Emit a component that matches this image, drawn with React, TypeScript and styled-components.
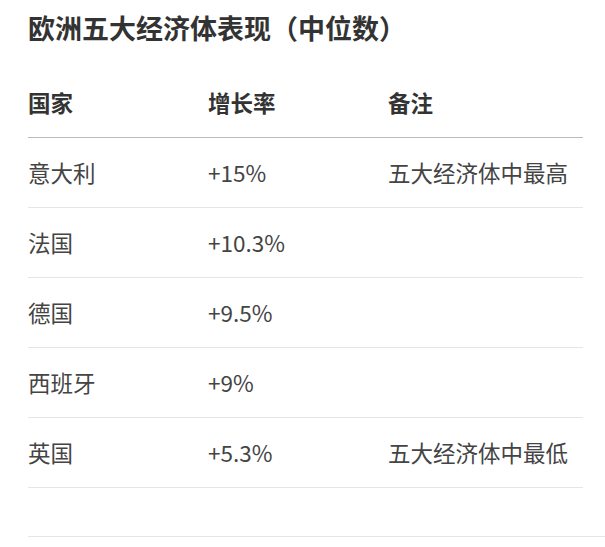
import React from "react";
import styled, { createGlobalStyle } from "styled-components";

const Global = createGlobalStyle`
  html, body { margin: 0; padding: 0; background: #fff; }
  body {
    font-family: "Noto Sans CJK SC", "Noto Sans", sans-serif;
    color: #333;
    overflow: hidden;
  }
`;

const Page = styled.div`
  width: 605px;
  height: 547px;
  padding: 0 0 0 28px;
  box-sizing: border-box;
  overflow: hidden;
`;

const Title = styled.h2`
  margin: 0;
  padding-top: 8px;
  font-size: 27px;
  line-height: 40px;
  font-weight: 700;
  color: #333;
  height: 68px;
  box-sizing: border-box;
`;

const Table = styled.div`
  width: 555px;
  display: grid;
  grid-template-columns: 180px 180px 1fr;
`;

const Cell = styled.div<{ $head?: boolean }>`
  height: 70px;
  display: flex;
  align-items: center;
  box-sizing: border-box;
  padding-bottom: 2px;
  font-size: 22.5px;
  line-height: 32px;
  font-weight: ${(p) => (p.$head ? 700 : 400)};
  color: ${(p) => (p.$head ? "#333" : "#444")};
  border-bottom: 1px solid ${(p) => (p.$head ? "#bbb" : "#e5e5e5")};
  white-space: nowrap;
`;

const Divider = styled.div`
  margin-top: 48px;
  height: 1px;
  width: 600px;
  background: #e5e5e5;
`;

const rows = [
  ["意大利", "+15%", "五大经济体中最高"],
  ["法国", "+10.3%", ""],
  ["德国", "+9.5%", ""],
  ["西班牙", "+9%", ""],
  ["英国", "+5.3%", "五大经济体中最低"],
];

export default function App() {
  return (
    <>
      <Global />
      <Page>
        <Title>欧洲五大经济体表现（中位数）</Title>
        <Table>
          <Cell $head>国家</Cell>
          <Cell $head>增长率</Cell>
          <Cell $head>备注</Cell>
          {rows.map((r) => (
            <React.Fragment key={r[0]}>
              <Cell>{r[0]}</Cell>
              <Cell>{r[1]}</Cell>
              <Cell>{r[2]}</Cell>
            </React.Fragment>
          ))}
        </Table>
        <Divider />
      </Page>
    </>
  );
}
